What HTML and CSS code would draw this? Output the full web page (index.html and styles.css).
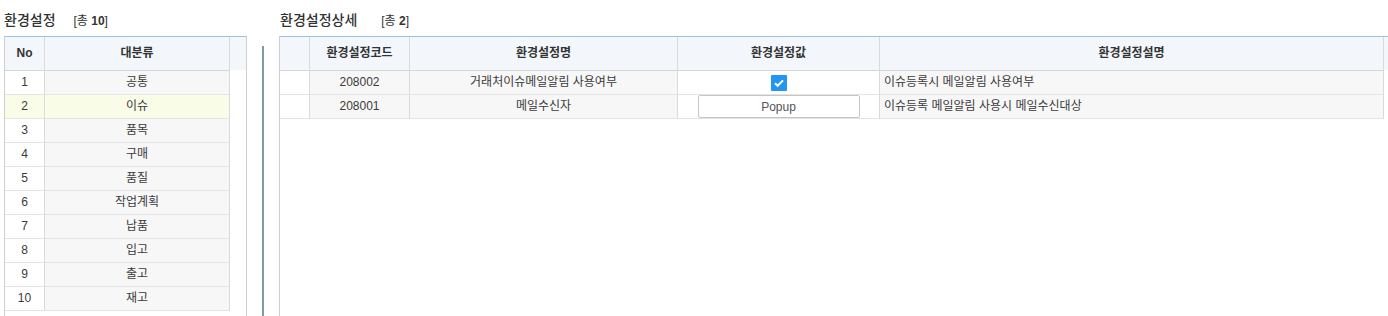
FILE: index.html
```html
<!DOCTYPE html>
<html lang="ko">
<head>
<meta charset="UTF-8">
<meta name="viewport" content="width=device-width, initial-scale=1.0">
<title>환경설정</title>
<link rel="stylesheet" href="styles.css">
</head>
<body>

<div class="layout">

<!-- 환경설정 (대분류 목록) -->
<section class="panel panel-left">
<div class="panel-title">
<h2>환경설정</h2>
<span class="count">[총 <b>10</b>]</span>
</div>

<div class="grid">
<div class="grid-body">
<div class="row row-head cols-left">
<div class="cell">No</div>
<div class="cell">대분류</div>
</div>
<div class="row cols-left"><div class="cell cell-num">1</div><div class="cell cell-ro">공통</div></div>
<div class="row cols-left row-selected"><div class="cell cell-num">2</div><div class="cell cell-ro">이슈</div></div>
<div class="row cols-left"><div class="cell cell-num">3</div><div class="cell cell-ro">품목</div></div>
<div class="row cols-left"><div class="cell cell-num">4</div><div class="cell cell-ro">구매</div></div>
<div class="row cols-left"><div class="cell cell-num">5</div><div class="cell cell-ro">품질</div></div>
<div class="row cols-left"><div class="cell cell-num">6</div><div class="cell cell-ro">작업계획</div></div>
<div class="row cols-left"><div class="cell cell-num">7</div><div class="cell cell-ro">납품</div></div>
<div class="row cols-left"><div class="cell cell-num">8</div><div class="cell cell-ro">입고</div></div>
<div class="row cols-left"><div class="cell cell-num">9</div><div class="cell cell-ro">출고</div></div>
<div class="row cols-left"><div class="cell cell-num">10</div><div class="cell cell-ro">재고</div></div>
</div>
<div class="scroll-space"><div class="scroll-head"></div></div>
</div>
</section>

<!-- Splitter -->
<div class="splitter"><div class="splitter-bar"></div></div>

<!-- 환경설정상세 -->
<section class="panel panel-right">
<div class="panel-title panel-title-detail">
<h2>환경설정상세</h2>
<span class="count">[총 <b>2</b>]</span>
</div>

<div class="grid">
<div class="grid-body">
<div class="row row-head cols-right">
<div class="cell"></div>
<div class="cell">환경설정코드</div>
<div class="cell">환경설정명</div>
<div class="cell">환경설정값</div>
<div class="cell">환경설정설명</div>
</div>
<div class="row cols-right">
<div class="cell cell-num"></div>
<div class="cell cell-ro">208002</div>
<div class="cell cell-ro">거래처이슈메일알림 사용여부</div>
<div class="cell cell-edit">
<span class="check">
<svg width="16" height="16" viewBox="0 0 16 16"><path d="M4 8.2l2.7 2.6L12 5.4" fill="none" stroke="#fff" stroke-width="2"/></svg>
</span>
</div>
<div class="cell cell-ro cell-left">이슈등록시 메일알림 사용여부</div>
</div>
<div class="row cols-right">
<div class="cell cell-num"></div>
<div class="cell cell-ro">208001</div>
<div class="cell cell-ro">메일수신자</div>
<div class="cell cell-edit"><button class="popup-btn">Popup</button></div>
<div class="cell cell-ro cell-left">이슈등록 메일알림 사용시 메일수신대상</div>
</div>
</div>
<div class="scroll-space"><div class="scroll-head"></div></div>
</div>
</section>

</div>

</body>
</html>
```

FILE: styles.css
```css
html, body {
margin: 0;
height: 100%;
overflow: hidden;
}

body {
font-family: "Liberation Sans", "Noto Sans CJK KR", sans-serif;
font-size: 12px;
color: #333;
background: #fff;
}

.layout {
display: flex;
height: 100%;
padding-left: 4px;
}

.panel {
display: flex;
flex-direction: column;
flex: none;
}

.panel-left {
width: 243px;
}

.panel-right {
width: 1122px;
}

/* Panel titles */
.panel-title {
display: flex;
align-items: center;
height: 36px;
padding-top: 2px;
box-sizing: border-box;
white-space: nowrap;
}

.panel-title h2 {
margin: 0;
font-size: 14px;
font-weight: 500;
color: #333;
}

.count {
margin-left: 18px;
font-size: 12px;
color: #333;
}

.panel-title-detail {
padding-left: 1px;
}

.panel-title-detail .count {
margin-left: 24px;
}

/* Grids */
.grid {
flex: 1;
display: flex;
border: 1px solid #cfcfcf;
border-top-color: #9cc3e4;
border-bottom: none;
}

.grid-body {
flex: none;
}

.scroll-space {
flex: 1;
}

.scroll-head {
height: 33px;
background: #f3f7fb;
}

.row {
display: grid;
}

.cols-left {
grid-template-columns: 40px 185px;
}

.cols-right {
grid-template-columns: 30px 100px 268px 202px 504px;
}

.cell {
box-sizing: border-box;
height: 24px;
line-height: 23px;
padding: 0 4px;
text-align: center;
color: #3a3a3a;
border-right: 1px solid #dadada;
border-bottom: 1px solid #e4e4e4;
white-space: nowrap;
overflow: hidden;
}

.row-head .cell {
height: 34px;
line-height: 33px;
background: #f3f7fb;
font-weight: bold;
color: #333;
border-bottom-color: #d6d6d6;
}

.cell-num {
background: #fff;
}

.cell-ro {
background: #f7f7f7;
}

.cell-edit {
background: #fff;
display: flex;
align-items: center;
justify-content: center;
}

.cell-left {
text-align: left;
}

.row-selected .cell {
background: #f9fce7;
}

.check {
display: block;
width: 16px;
height: 16px;
background: #2196f3;
border-radius: 1px;
}

.check svg {
display: block;
}

.popup-btn {
width: 162px;
height: 23px;
padding: 0;
font-family: "Liberation Sans", "Noto Sans CJK KR", sans-serif;
font-size: 12px;
color: #555;
background: #fff;
border: 1px solid #c6c6c6;
border-radius: 2px;
}

/* Splitter */
.splitter {
flex: none;
width: 32px;
display: flex;
justify-content: center;
padding-top: 46px;
box-sizing: border-box;
}

.splitter-bar {
width: 2px;
background: #7f9ca3;
}
```
